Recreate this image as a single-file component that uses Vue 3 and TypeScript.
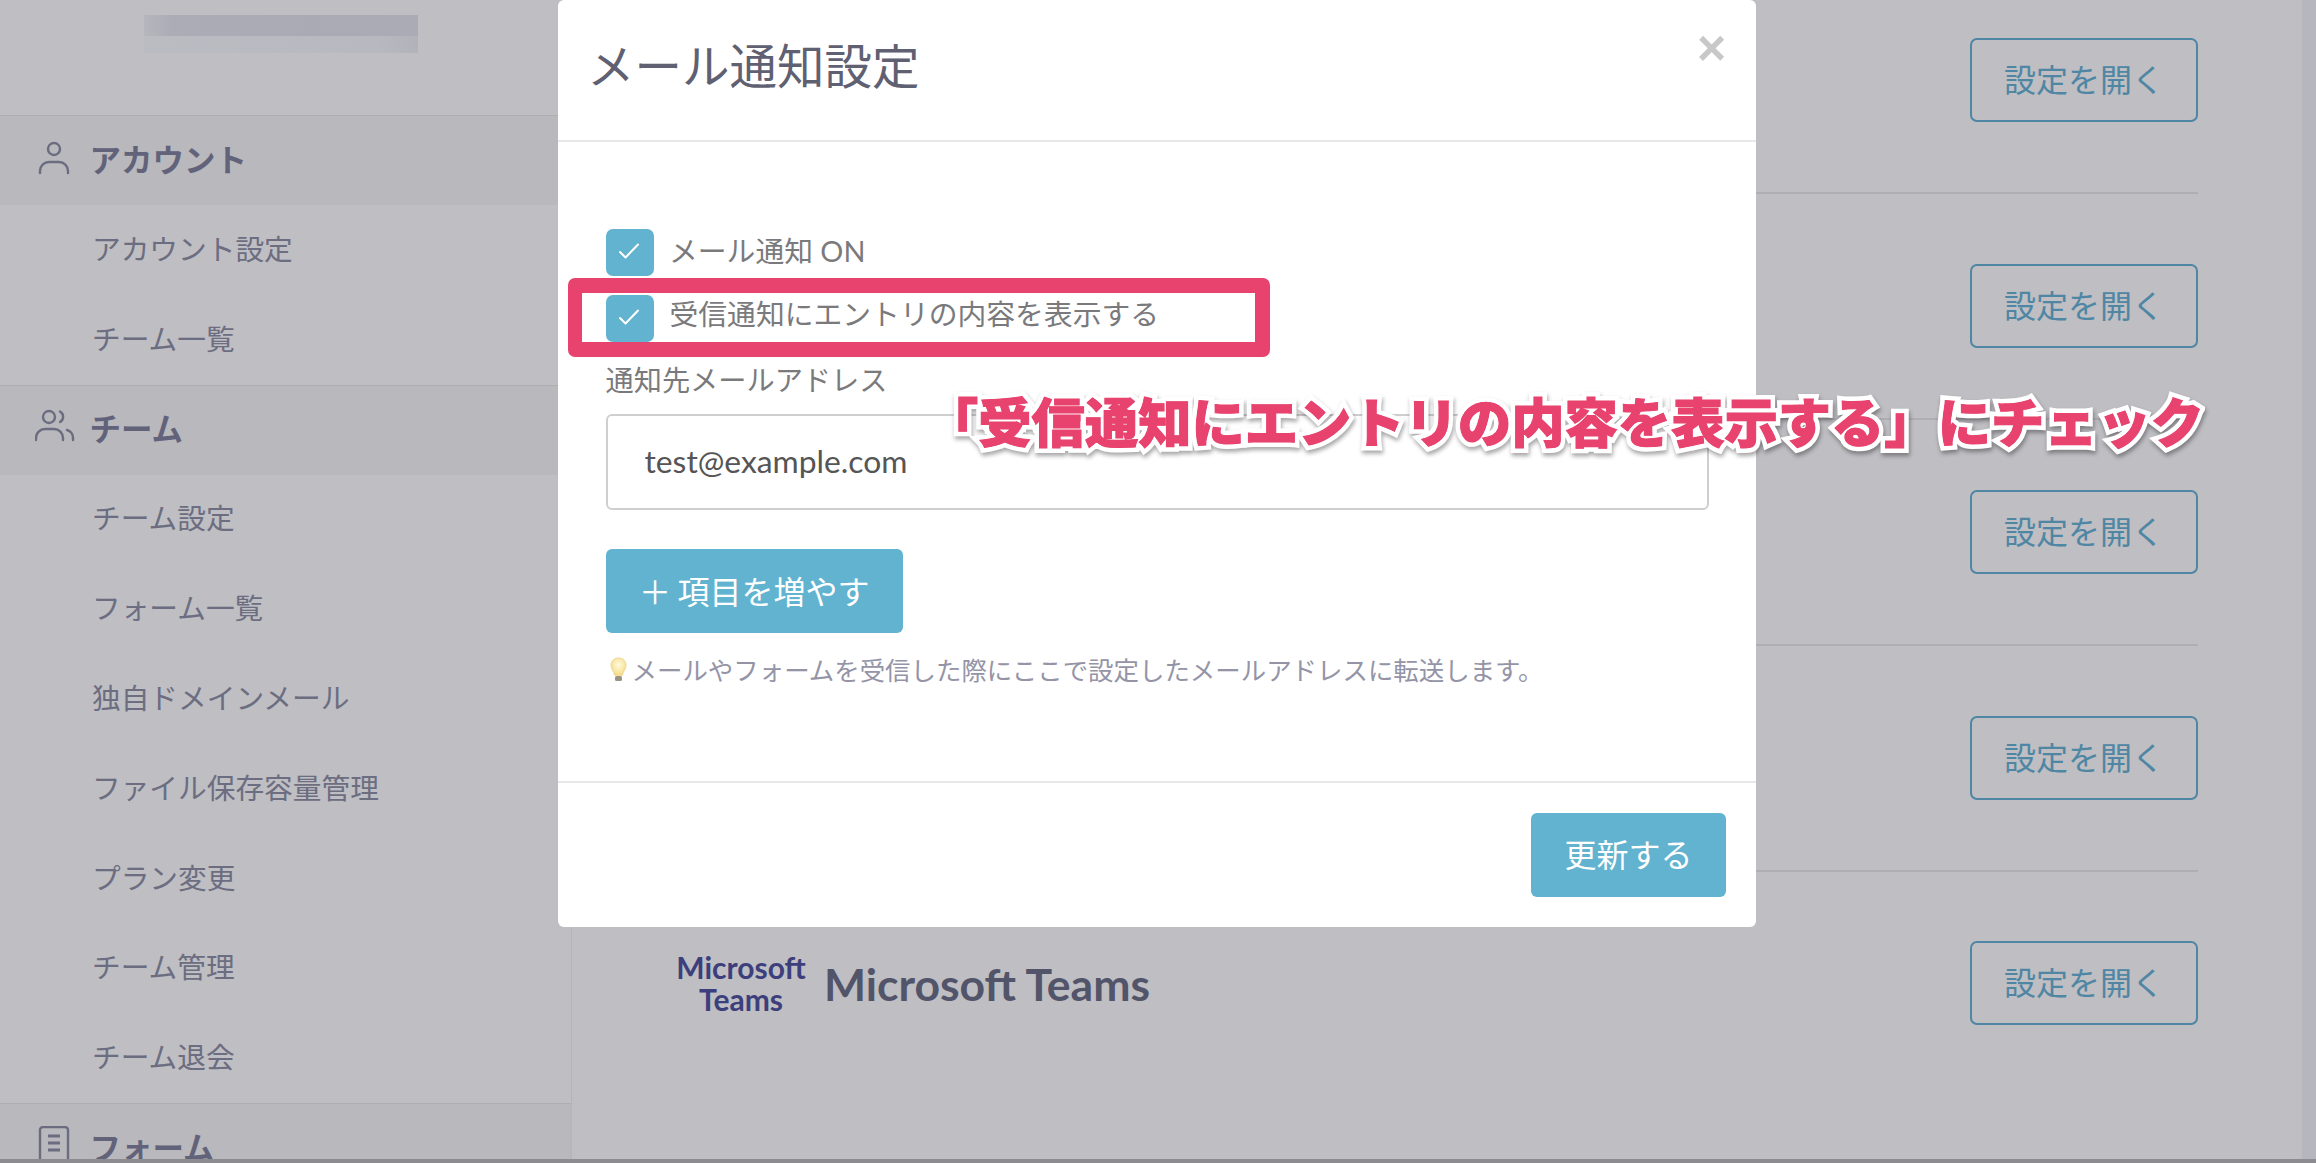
<template>
  <div class="screen">
    <div class="page">
      <aside class="sidebar">
        <div class="brand">
          <div class="mosaic mosaic--top"></div>
          <div class="mosaic mosaic--bottom"></div>
        </div>
        <template v-for="group in menu" :key="group.title">
          <div class="side-head">
            <span class="side-icon">
              <svg v-if="group.icon === 'user'" width="40" height="40" viewBox="0 0 40 40" fill="none" stroke="currentColor" stroke-width="2.4" stroke-linecap="round">
                <circle cx="19" cy="11" r="6" />
                <path d="M5 35v-2a9 9 0 0 1 9-9h10a9 9 0 0 1 9 9v2" />
              </svg>
              <svg v-else-if="group.icon === 'team'" width="40" height="40" viewBox="0 0 40 40" fill="none" stroke="currentColor" stroke-width="2.4" stroke-linecap="round">
                <circle cx="14" cy="10" r="6" />
                <path d="M1 33v-2a9 9 0 0 1 9-9h9a9 9 0 0 1 9 9v2" />
                <path d="M25 4.500a6 6 0 0 1 0 10.500" />
                <path d="M32 23a8 8 0 0 1 6 8v2" />
              </svg>
              <svg v-else width="40" height="40" viewBox="0 0 40 40" fill="none" stroke="currentColor" stroke-width="2.4">
                <rect x="5" y="1" width="28" height="38" rx="3" />
                <path d="M13 10h12M13 17h12M13 24h12" stroke-width="3" />
              </svg>
            </span>
            <strong>{{ group.title }}</strong>
          </div>
          <a v-for="item in group.items" :key="item" class="side-item">{{ item }}</a>
        </template>
      </aside>

      <main class="content">
        <div v-for="(row, i) in rows" :key="i" class="row">
          <div class="row__name">
            <template v-if="row">
              <span class="ms-logo">Microsoft<br />Teams</span>
              <span class="ms-name">{{ row }}</span>
            </template>
          </div>
          <button class="open-btn">設定を開く</button>
        </div>
      </main>

      <div class="scroll-track"></div>
    </div>

    <section class="modal">
      <header class="modal__head">
        <h2>メール通知設定</h2>
        <span class="modal__close">×</span>
      </header>
      <div class="modal__body">
        <label v-for="opt in options" :key="opt" class="check">
          <span class="check__box">
            <svg width="48" height="47" viewBox="0 0 48 47" fill="none" stroke="#fff" stroke-width="2" stroke-linecap="round" stroke-linejoin="round">
              <path d="M14 23l5.500 5.500L32 15.500" />
            </svg>
          </span>
          <span class="check__label">{{ opt }}</span>
        </label>
        <div class="field-label">通知先メールアドレス</div>
        <input class="field-input" type="text" value="test@example.com" />
        <button class="add-btn"><span class="add-btn__plus">＋</span>項目を増やす</button>
        <p class="hint">
          <svg width="17" height="26" viewBox="0 0 17 26">
            <defs>
              <radialGradient id="bulb" cx="50%" cy="40%" r="60%">
                <stop offset="0" stop-color="#fffbe0" />
                <stop offset="1" stop-color="#f6dc86" />
              </radialGradient>
            </defs>
            <path d="M8.500 1C4 1 1 4.300 1 8.200c0 3.600 3 6 3.600 10h7.800c.6-4 3.600-6.400 3.600-10C16 4.300 13 1 8.500 1z" fill="url(#bulb)" stroke="#edd68e" />
            <rect x="5" y="19" width="7" height="5" rx="1.500" fill="#9b9482" />
          </svg>
          <span>メールやフォームを受信した際にここで設定したメールアドレスに転送します。</span>
        </p>
      </div>
      <footer class="modal__foot">
        <button class="save-btn">更新する</button>
      </footer>
    </section>

    <div class="highlight"></div>
    <div class="callout" :data-text="callout">{{ callout }}</div>
  </div>
</template>

<script setup lang="ts">
const menu = [
  { title: 'アカウント', icon: 'user', items: ['アカウント設定', 'チーム一覧'] },
  {
    title: 'チーム',
    icon: 'team',
    items: ['チーム設定', 'フォーム一覧', '独自ドメインメール', 'ファイル保存容量管理', 'プラン変更', 'チーム管理', 'チーム退会'],
  },
  { title: 'フォーム', icon: 'form', items: [] as string[] },
]

const rows = ['', '', '', '', 'Microsoft Teams']
const options = ['メール通知 ON', '受信通知にエントリの内容を表示する']
const callout = '「受信通知にエントリの内容を表示する」にチェック'
</script>

<style>
html, body { margin: 0; background: #6d6d70; overflow: hidden; }
</style>

<style scoped>
.screen {
  position: relative;
  width: 2316px;
  height: 1163px;
  overflow: hidden;
  background: linear-gradient(#66666a, #8c8c90);
  font-family: Lato, "Noto Sans CJK JP", sans-serif;
}
.page { display: flex; height: 1159px; background: #bebec3; overflow: hidden; }

.sidebar { flex: 0 0 572px; box-sizing: border-box; border-right: 1px solid #b4b4ba; height: 1159px; overflow: hidden; }
.brand { height: 115px; box-sizing: border-box; padding-top: 15px; padding-left: 144px; }
.mosaic { width: 274px; }
.mosaic--top { height: 21px; background: linear-gradient(90deg, #b6b7bd, #abacb5 10%, #a9aab3 60%, #aaabb4); }
.mosaic--bottom { height: 17px; background: linear-gradient(90deg, #bbbcc2, #b8b9c0 85%, #b1b2ba); }
.side-head {
  display: flex;
  align-items: center;
  height: 89px;
  border-top: 1px solid #adadb4;
  background: #b8b8bd;
  color: #62637a;
  font-size: 31.500px;
}
.side-head strong { font-weight: 700; margin-left: 14.500px; padding-bottom: 6px; }
.side-icon { display: flex; width: 75px; justify-content: flex-end; color: #6b6c80; margin-top: -6px; }
.side-icon svg { flex: none; }
.side-item {
  display: flex;
  align-items: center;
  height: 89.800px;
  padding-left: 92px;
  font-size: 28.700px;
  color: #6c6d80;
  padding-bottom: 5px;
  box-sizing: border-box;
}

.content { flex: 1; box-sizing: border-box; padding: 0 104px; margin-top: -32.500px; }
.row { display: flex; align-items: center; justify-content: space-between; height: 226px; box-sizing: border-box; border-bottom: 2px solid #aeaeb5; }
.row:last-child { border-bottom: none; padding-bottom: 3px; }
.row__name { display: flex; align-items: center; }
.ms-logo { width: 130px; text-align: center; color: #3d3f7d; font-weight: 700; font-size: 30px; line-height: 32px; }
.ms-name { margin-left: 18px; color: #52546a; font-weight: 700; font-size: 44.500px; }
.open-btn {
  width: 228px;
  height: 84px;
  border: 2px solid #4f86a3;
  border-radius: 7px;
  background: transparent;
  color: #4f86a3;
  font: inherit;
  font-size: 32px;
  padding: 0 0 4px;
}
.scroll-track { flex: 0 0 14px; background: #b5b6be; }

.modal {
  position: absolute;
  left: 558px;
  top: 0;
  width: 1198px;
  height: 927px;
  display: flex;
  flex-direction: column;
  background: #fff;
  border-radius: 6px;
}
.modal__head { position: relative; height: 140px; border-bottom: 2px solid #e8e8e8; flex: none; }
.modal__head h2 { margin: 0; padding: 36px 0 0 29px; font-size: 47.500px; line-height: 60px; font-weight: 400; color: #5f6072; }
.modal__close { position: absolute; left: 1139px; top: 20px; font-size: 50px; line-height: 56px; font-weight: 700; color: #c8c8c8; font-family: "Liberation Sans", sans-serif; }
.modal__body { flex: 1; padding: 87px 47px 0 47.500px; box-sizing: border-box; }
.check { display: flex; height: 47px; margin-bottom: 19px; }
.check__box { width: 48px; height: 47px; border-radius: 7px; background: #62b3d0; flex: none; display: block; }
.check__label { margin-left: 15.500px; font-size: 28.800px; line-height: 44px; color: #7a7a7c; }
.check + .check .check__label { margin-top: -3px; margin-left: 16px; }
.field-label { margin-top: -1px; font-size: 28.200px; line-height: 40px; color: #7a7a7c; }
.field-input {
  display: block;
  width: 1103px;
  height: 96px;
  margin-top: 14px;
  box-sizing: border-box;
  padding: 0 37px 2px;
  border: 2px solid #cfcfcf;
  border-radius: 6px;
  color: #555;
  font: inherit;
  font-size: 31.800px;
  outline: none;
}
.add-btn {
  display: flex;
  align-items: center;
  width: 297px;
  height: 84px;
  margin-top: 39px;
  padding: 0 0 3px 27px;
  border: none;
  border-radius: 6px;
  background: #62b3d0;
  color: #fff;
  font: inherit;
  font-size: 32px;
  white-space: nowrap;
}
.add-btn__plus { width: 45px; font-size: 32px; }
.hint { display: flex; align-items: center; margin: 23px 0 0 4px; font-size: 25.450px; line-height: 28px; color: #9494a6; white-space: nowrap; }
.hint svg { margin-right: 5px; flex: none; }
.modal__foot { flex: none; height: 146px; box-sizing: border-box; border-top: 2px solid #e8e8e8; display: flex; justify-content: flex-end; padding: 30px 30px 0 0; }
.save-btn { width: 195px; height: 84px; border: none; border-radius: 6px; background: #62b3d0; color: #fff; font: inherit; font-size: 32px; padding: 0 0 5px; }

.highlight {
  position: absolute;
  left: 568px;
  top: 278px;
  width: 702px;
  height: 79px;
  box-sizing: border-box;
  border: solid #e8436e;
  border-width: 15px 15px 15px 14px;
  border-radius: 7px;
  pointer-events: none;
}
.callout {
  position: absolute;
  left: 925px;
  top: 381px;
  font-family: "Noto Sans CJK JP", sans-serif;
  font-weight: 900;
  font-size: 53.300px;
  line-height: 78px;
  white-space: nowrap;
  color: #e8436e;
  -webkit-text-stroke: 10px #fff;
  paint-order: stroke fill;
  filter: drop-shadow(1px 3px 2px rgba(0, 0, 0, 0.35));
}
.callout::after {
  content: attr(data-text);
  position: absolute;
  left: 0;
  top: 0;
  color: #e8436e;
  -webkit-text-stroke: 1px #e8436e;
}
</style>
